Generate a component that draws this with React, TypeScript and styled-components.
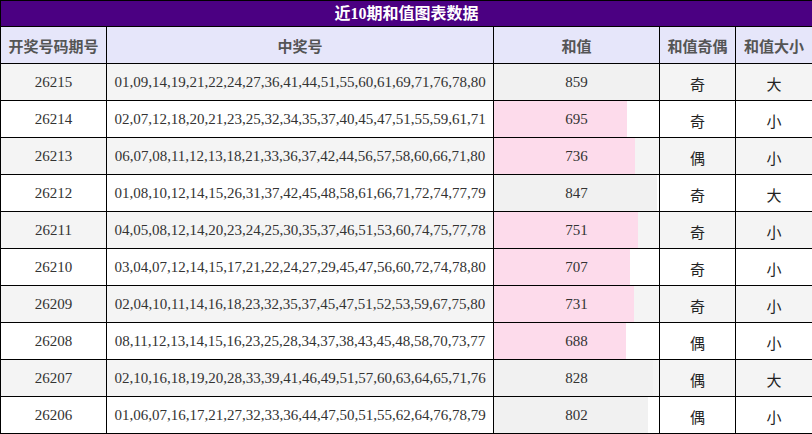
import React from "react";
import styled, { createGlobalStyle } from "styled-components";

const Global = createGlobalStyle`
  html, body { margin: 0; padding: 0; background: #fff; }
  body { font-family: "Liberation Serif", "Noto Sans CJK SC", serif; }
`;

type Row = { issue: string; nums: string; sum: number; parity: string; size: string };

const rows: Row[] = [
  { issue: "26215", nums: "01,09,14,19,21,22,24,27,36,41,44,51,55,60,61,69,71,76,78,80", sum: 859, parity: "奇", size: "大" },
  { issue: "26214", nums: "02,07,12,18,20,21,23,25,32,34,35,37,40,45,47,51,55,59,61,71", sum: 695, parity: "奇", size: "小" },
  { issue: "26213", nums: "06,07,08,11,12,13,18,21,33,36,37,42,44,56,57,58,60,66,71,80", sum: 736, parity: "偶", size: "小" },
  { issue: "26212", nums: "01,08,10,12,14,15,26,31,37,42,45,48,58,61,66,71,72,74,77,79", sum: 847, parity: "奇", size: "大" },
  { issue: "26211", nums: "04,05,08,12,14,20,23,24,25,30,35,37,46,51,53,60,74,75,77,78", sum: 751, parity: "奇", size: "小" },
  { issue: "26210", nums: "03,04,07,12,14,15,17,21,22,24,27,29,45,47,56,60,72,74,78,80", sum: 707, parity: "奇", size: "小" },
  { issue: "26209", nums: "02,04,10,11,14,16,18,23,32,35,37,45,47,51,52,53,59,67,75,80", sum: 731, parity: "奇", size: "小" },
  { issue: "26208", nums: "08,11,12,13,14,15,16,23,25,28,34,37,38,43,45,48,58,70,73,77", sum: 688, parity: "偶", size: "小" },
  { issue: "26207", nums: "02,10,16,18,19,20,28,33,39,41,46,49,51,57,60,63,64,65,71,76", sum: 828, parity: "偶", size: "大" },
  { issue: "26206", nums: "01,06,07,16,17,21,27,32,33,36,44,47,50,51,55,62,64,76,78,79", sum: 802, parity: "偶", size: "小" },
];

const maxSum = Math.max(...rows.map((r) => r.sum));

const Table = styled.table`
  width: 812px;
  border-collapse: collapse;
  table-layout: fixed;
  border: 1px solid #000;
`;

const TitleCell = styled.th`
  height: 25px;
  padding: 0;
  background: #4b0082;
  color: #fff;
  font-family: "Liberation Serif", "Noto Sans CJK SC", serif;
  font-weight: bold;
  font-size: 16px;
  line-height: 25px;
  text-align: center;
  border: 1px solid #000;
`;

const HeadCell = styled.th`
  height: 36px;
  padding: 0;
  background: #e6e6fa;
  color: #555;
  font-family: "Noto Sans CJK SC", sans-serif;
  font-weight: bold;
  font-size: 15px;
  text-align: center;
  border: 1px solid #000;
`;

const BodyRow = styled.tr`
  &:nth-child(odd) {
    background: #f4f4f4;
  }
`;

const Cell = styled.td<{ $cjk?: boolean }>`
  height: ${(p) => (p.$cjk ? "33px" : "36px")};
  padding: ${(p) => (p.$cjk ? "3px 0 0" : "0")};
  text-align: center;
  border: 1px solid #000;
  color: ${(p) => (p.$cjk ? "#222" : "#333")};
  font-family: ${(p) =>
    p.$cjk ? `"Noto Sans CJK SC", sans-serif` : `"Liberation Serif", serif`};
  font-size: 15px;
  white-space: nowrap;
`;

const SumCell = styled(Cell)`
  position: relative;
`;

const Bar = styled.div<{ $low: boolean }>`
  position: absolute;
  left: 0;
  top: 0;
  bottom: 0;
  background: ${(p) => (p.$low ? "#fddbeb" : "#f1f1f1")};
`;

const SumText = styled.span`
  position: relative;
`;

export default function App() {
  return (
    <>
      <Global />
      <Table>
        <colgroup>
          <col style={{ width: 106 }} />
          <col style={{ width: 387 }} />
          <col style={{ width: 166 }} />
          <col style={{ width: 76 }} />
          <col style={{ width: 77 }} />
        </colgroup>
        <thead>
          <tr>
            <TitleCell colSpan={5}>近10期和值图表数据</TitleCell>
          </tr>
          <tr>
            <HeadCell>开奖号码期号</HeadCell>
            <HeadCell>中奖号</HeadCell>
            <HeadCell>和值</HeadCell>
            <HeadCell>和值奇偶</HeadCell>
            <HeadCell>和值大小</HeadCell>
          </tr>
        </thead>
        <tbody>
          {rows.map((r) => (
            <BodyRow key={r.issue}>
              <Cell>{r.issue}</Cell>
              <Cell>{r.nums}</Cell>
              <SumCell>
                <Bar $low={r.sum < 800} style={{ width: `${(r.sum / maxSum) * 100}%` }} />
                <SumText>{r.sum}</SumText>
              </SumCell>
              <Cell $cjk>{r.parity}</Cell>
              <Cell $cjk>{r.size}</Cell>
            </BodyRow>
          ))}
        </tbody>
      </Table>
    </>
  );
}
